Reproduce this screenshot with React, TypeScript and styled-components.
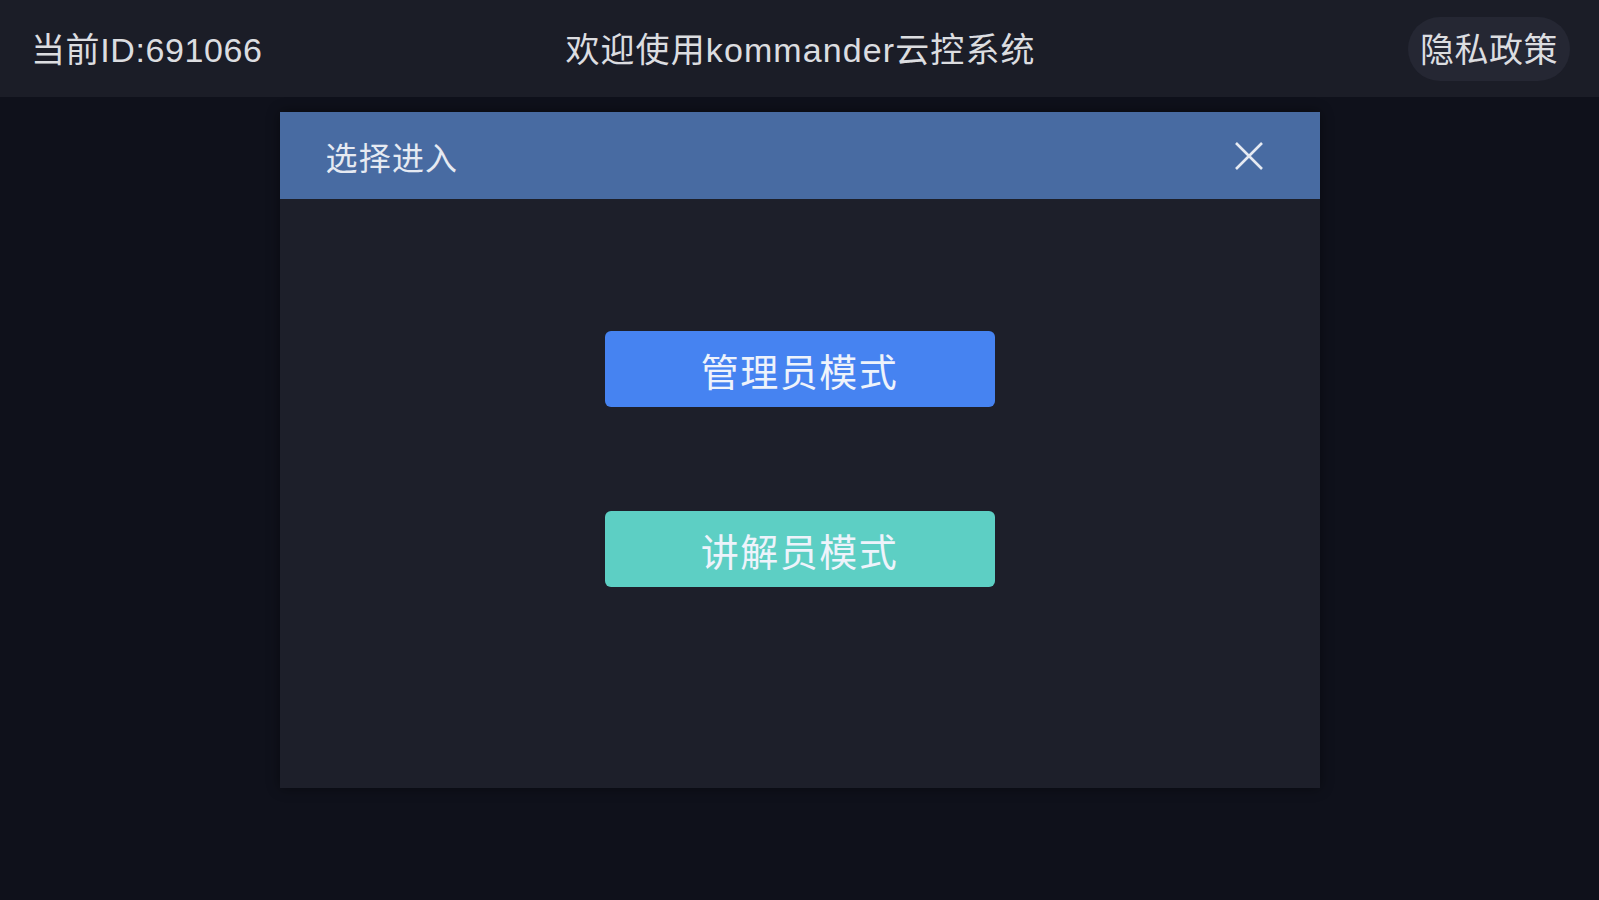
import React from 'react';
import styled, { createGlobalStyle } from 'styled-components';

const GlobalStyle = createGlobalStyle`
  html, body {
    margin: 0;
    padding: 0;
    background: #0f111b;
  }
  body {
    font-family: "Liberation Sans", "Noto Sans CJK SC", sans-serif;
    min-height: 900px;
  }
`;

const Page = styled.div`
  width: 100%;
  min-height: 900px;
  background: #0f111b;
  display: flex;
  flex-direction: column;
`;

const TopBar = styled.header`
  height: 97px;
  background: #1b1d27;
  display: grid;
  grid-template-columns: 1fr auto 1fr;
  align-items: center;
  padding: 0 29px 0 31px;
  box-sizing: border-box;
  color: #dcdde0;
  font-size: 34px;
`;

const DeviceId = styled.div`
  justify-self: start;
  letter-spacing: 0.6px;
  padding-bottom: 2px;
`;

const Title = styled.div`
  justify-self: center;
  letter-spacing: 1.1px;
  padding-bottom: 2px;
`;

const PrivacyButton = styled.button`
  justify-self: end;
  height: 64px;
  padding: 0 12px 2px;
  border: none;
  border-radius: 32px;
  background: #252733;
  color: #dcdde0;
  font-family: inherit;
  font-size: 34px;
  letter-spacing: 0.5px;
  cursor: pointer;
`;

const Dialog = styled.section`
  width: 1040px;
  height: 676px;
  margin: 15px auto 0;
  background: #1d1f2a;
  box-shadow: 0 0 12px rgba(0, 0, 0, 0.45);
  display: flex;
  flex-direction: column;
`;

const DialogHeader = styled.div`
  height: 87px;
  background: #486ba2;
  display: flex;
  align-items: center;
  justify-content: space-between;
  padding: 0 54px 0 46px;
  box-sizing: border-box;
`;

const DialogTitle = styled.h2`
  margin: 0;
  font-weight: normal;
  font-size: 32px;
  letter-spacing: 1.2px;
  color: #e6eaf2;
`;

const CloseButton = styled.button`
  width: 34px;
  height: 34px;
  padding: 0;
  border: none;
  background: transparent;
  display: flex;
  align-items: center;
  justify-content: center;
  cursor: pointer;
`;

const DialogBody = styled.div`
  flex: 1;
  display: flex;
  flex-direction: column;
  align-items: center;
  padding-top: 132px;
  gap: 104px;
`;

const ModeButton = styled.button<{ $color: string }>`
  width: 390px;
  height: 76px;
  border: none;
  border-radius: 6px;
  background: ${(p) => p.$color};
  color: #eef3fb;
  font-family: inherit;
  font-size: 38px;
  letter-spacing: 1.5px;
  cursor: pointer;
`;

const App: React.FC = () => {
  return (
    <>
      <GlobalStyle />
      <Page>
        <TopBar>
          <DeviceId>当前ID:691066</DeviceId>
          <Title>欢迎使用kommander云控系统</Title>
          <PrivacyButton>隐私政策</PrivacyButton>
        </TopBar>
        <Dialog>
          <DialogHeader>
            <DialogTitle>选择进入</DialogTitle>
            <CloseButton aria-label="close">
              <svg width="30" height="30" viewBox="0 0 30 30">
                <path d="M2 2 L28 28 M28 2 L2 28" stroke="#e6eaf2" strokeWidth="2.6" fill="none" />
              </svg>
            </CloseButton>
          </DialogHeader>
          <DialogBody>
            <ModeButton $color="#4683f1">管理员模式</ModeButton>
            <ModeButton $color="#5dcfc4">讲解员模式</ModeButton>
          </DialogBody>
        </Dialog>
      </Page>
    </>
  );
};

export default App;
